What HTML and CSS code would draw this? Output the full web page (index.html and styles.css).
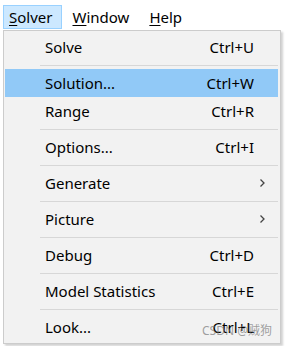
FILE: index.html
```html
<!DOCTYPE html>
<html>
<head>
<meta charset="utf-8">
<link rel="stylesheet" href="styles.css">
</head>
<body>
<div class="menubar">
  <span class="top-item active"><u>S</u>olver</span>
  <span class="top-item"><u>W</u>indow</span>
  <span class="top-item"><u>H</u>elp</span>
</div>
<div class="menu">
  <div class="item"><span class="label">Solve</span><span class="key">Ctrl+U</span></div>
  <div class="sep"></div>
  <div class="item hl"><span class="label">Solution...</span><span class="key">Ctrl+W</span></div>
  <div class="item"><span class="label">Range</span><span class="key">Ctrl+R</span></div>
  <div class="sep"></div>
  <div class="item"><span class="label">Options...</span><span class="key">Ctrl+I</span></div>
  <div class="sep"></div>
  <div class="item"><span class="label">Generate</span><span class="arrow"><svg width="7" height="10" viewBox="0 0 7 10"><path d="M1.5 1.5 L5 5 L1.5 8.5" fill="none" stroke="#444" stroke-width="1.3"/></svg></span></div>
  <div class="sep"></div>
  <div class="item"><span class="label">Picture</span><span class="arrow"><svg width="7" height="10" viewBox="0 0 7 10"><path d="M1.5 1.5 L5 5 L1.5 8.5" fill="none" stroke="#444" stroke-width="1.3"/></svg></span></div>
  <div class="sep"></div>
  <div class="item"><span class="label">Debug</span><span class="key">Ctrl+D</span></div>
  <div class="sep"></div>
  <div class="item"><span class="label">Model Statistics</span><span class="key">Ctrl+E</span></div>
  <div class="sep"></div>
  <div class="item"><span class="label">Look...</span><span class="key">Ctrl+L</span><span class="watermark">CSDN @贼狗</span></div>
</div>
</body>
</html>
```
FILE: styles.css
```css
html, body {
  margin: 0;
  padding: 0;
  background: #ffffff;
}
body {
  font-family: "Noto Sans", "Noto Sans CJK SC", sans-serif;
  font-size: 15px;
  color: #000;
  width: 286px;
  height: 346px;
  overflow: hidden;
}
.menubar {
  display: flex;
  height: 30px;
  padding: 5px 0 0 3px;
  box-sizing: border-box;
}
.top-item {
  height: 24px;
  line-height: 22px;
  padding: 0 9px 0 5px;
  border: 1px solid transparent;
  box-sizing: border-box;
  margin-right: 4px;
}
.top-item u {
  text-decoration-thickness: 1px;
  text-underline-offset: 2px;
}
.top-item.active {
  background: #cce8ff;
  border-color: #99d1ff;
}
.menu {
  margin-left: 3px;
  width: 278px;
  box-sizing: border-box;
  background: #f2f2f2;
  border: 1px solid #cccccc;
  padding: 2px 2px 2px 1px;
  box-shadow: 2px 2px 2px rgba(0, 0, 0, 0.18);
  position: relative;
}
.item {
  height: 28px;
  display: flex;
  align-items: center;
  padding: 0 24px 0 40px;
  position: relative;
}
.item.hl {
  background: #91c9f7;
}
.label {
  flex: 1;
}
.key {
  text-align: right;
}
.arrow {
  display: flex;
  align-items: center;
  margin-right: -12px;
}
.sep {
  height: 8px;
  display: flex;
  align-items: center;
  margin-left: 35px;
}
.sep::after {
  content: "";
  display: block;
  width: 100%;
  height: 1px;
  background: #d7d7d7;
}
.watermark {
  position: absolute;
  right: 6px;
  top: 8px;
  font-size: 12px;
  color: rgba(120, 120, 120, 0.7);
}
```
